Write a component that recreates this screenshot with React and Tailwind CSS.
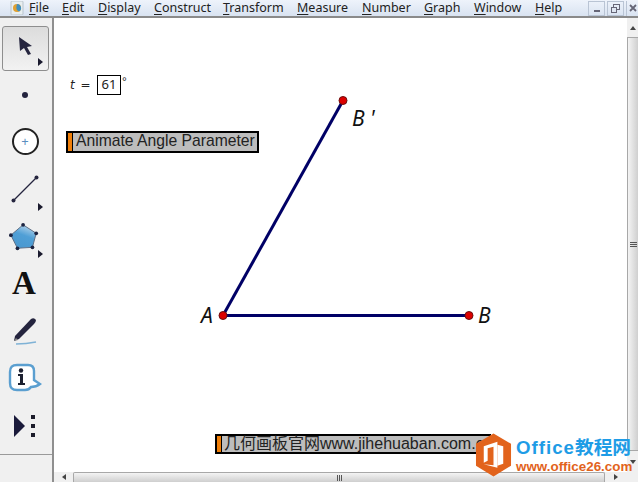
import React from 'react';

const MENUS = [
  ['F', 'ile', 'w-[33px]'],
  ['E', 'dit', 'w-[36px]'],
  ['D', 'isplay', 'w-[56px]'],
  ['C', 'onstruct', 'w-[69px]'],
  ['T', 'ransform', 'w-[74px]'],
  ['M', 'easure', 'w-[65px]'],
  ['N', 'umber', 'w-[62px]'],
  ['G', 'raph', 'w-[50px]'],
  ['W', 'indow', 'w-[61px]'],
  ['H', 'elp', 'w-[40px]'],
];

function Arrow() {
  return (
    <svg width="6" height="8" viewBox="0 0 6 8" className="absolute">
      <path d="M0 0L5 4L0 8Z" fill="#1a1a2e" />
    </svg>
  );
}

function MenuBar() {
  return (
    <div className="flex h-[18px] items-center border-b-2 border-[#8a8a8a] bg-gradient-to-b from-[#eef3fb] to-[#d9e3f1] text-[12.5px] text-[#222]">
      <div className="flex w-[29px] shrink-0 justify-center pl-1">
        <svg width="14" height="14" viewBox="0 0 14 14">
          <rect x="1" y="0" width="12" height="14" rx="1" fill="#e8eef0" stroke="#b8c4cc" />
          <circle cx="7" cy="7" r="4" fill="#e0a030" />
          <path d="M7 3A4 4 0 0 1 9 10.500Q5 9 7 3Z" fill="#3f8fc0" />
        </svg>
      </div>
      {MENUS.map(([first, rest, width]) => (
        <div key={first + rest} className={`${width} shrink-0`}>
          <span className="underline decoration-1 underline-offset-2">{first}</span>
          {rest}
        </div>
      ))}
      <div className="ml-auto flex h-[16px] items-center gap-[2px] pr-0">
        <div className="flex h-[15px] w-[17px] items-end justify-center border border-[#b9c4d4] pb-[3px]">
          <div className="h-[2px] w-[6px] bg-[#667]" />
        </div>
        <div className="flex h-[15px] w-[17px] items-center justify-center border border-[#b9c4d4]">
          <svg width="9" height="9" viewBox="0 0 9 9" fill="none" stroke="#667">
            <rect x="2.500" y="0.500" width="6" height="5" />
            <rect x="0.500" y="3.500" width="5" height="5" fill="#dfe6f2" />
          </svg>
        </div>
        <div className="flex h-[15px] w-[12px] items-center justify-center border-l border-[#b9c4d4]">
          <svg width="8" height="8" viewBox="0 0 8 8" stroke="#667" strokeWidth="1.800">
            <path d="M1 1L7 7M7 1L1 7" />
          </svg>
        </div>
      </div>
    </div>
  );
}

function ToolSlot({ children, more }) {
  return (
    <div className="relative flex h-[47.300px] items-center justify-center">
      {children}
      {more && (
        <div className="absolute bottom-[2px] right-[8px] flex h-2 w-[6px]">
          <Arrow />
        </div>
      )}
    </div>
  );
}

function ToolBar() {
  return (
    <div className="flex w-[54px] shrink-0 flex-col border-r-2 border-[#8f8f8f] bg-[#f0f0f0]">
      <div className="flex-1 pt-[8px]">
        <div className="relative mx-[2px] flex h-[45px] w-[47px] items-center justify-center rounded-[3px] border border-[#8e8e8e] bg-gradient-to-b from-[#dcdcdc] to-[#f2f2f2]">
          <svg width="16" height="20" viewBox="0 0 16 20" className="mb-[6px] ml-[1px]">
            <path d="M1 1L14 10L9 11L13 18L10 19L6 12L2 15Z" fill="#24243e" />
          </svg>
          <div className="absolute bottom-[4px] right-[4px] h-2 w-[6px]">
            <Arrow />
          </div>
        </div>
        <ToolSlot>
          <div className="mr-[2px] h-[6px] w-[6px] rounded-full bg-[#24243e]" />
        </ToolSlot>
        <ToolSlot>
          <div className="mr-[2px] flex h-[27px] w-[27px] items-center justify-center rounded-full border-2 border-[#222] bg-white text-[13px] leading-none text-[#5b8fc0]">
            +
          </div>
        </ToolSlot>
        <ToolSlot more>
          <svg width="28" height="28" viewBox="0 0 28 28" className="mr-[2px]">
            <path d="M2 26L26 2" stroke="#24243e" strokeWidth="1.200" />
            <circle cx="2.500" cy="25.500" r="2" fill="#24243e" />
            <circle cx="25.500" cy="2.500" r="2" fill="#24243e" />
          </svg>
        </ToolSlot>
        <ToolSlot more>
          <svg width="30" height="30" viewBox="0 0 32 30" className="mr-[5px]">
            <defs>
              <linearGradient id="poly" x1="0.700" y1="0" x2="0.300" y2="1">
                <stop offset="0" stopColor="#b9d6ec" />
                <stop offset="0.450" stopColor="#4f9fd6" />
                <stop offset="1" stopColor="#4a98cf" />
              </linearGradient>
            </defs>
            <path d="M15 2L29 11L25 26L9 27L2 13Z" fill="url(#poly)" stroke="#5a6a80" />
            {[[15, 2], [29, 11], [25, 26], [9, 27], [2, 13]].map(([cx, cy]) => (
              <circle key={cx} cx={cx} cy={cy} r="2" fill="#1c2340" />
            ))}
          </svg>
        </ToolSlot>
        <ToolSlot>
          <span className="mr-[4px] font-['Liberation_Serif',serif] text-[33px] font-bold leading-none text-[#111]">A</span>
        </ToolSlot>
        <ToolSlot>
          <svg width="28" height="28" viewBox="0 0 28 28" className="mr-[5px]">
            <path d="M5 19L21 2Q24 0 26 3Q26 5 24 7L9 22L4 24Z" fill="#24243e" />
            <path d="M4 24L6 21L8 23Z" fill="#8a8a8a" />
            <path d="M6 27Q16 27 26 25" fill="none" stroke="#7fb2d6" strokeWidth="1.500" />
          </svg>
        </ToolSlot>
        <ToolSlot>
          <svg width="34" height="30" viewBox="0 0 34 30" className="mr-[2px]">
            <path d="M9 2H20Q26 2 26 8V17L32 21Q28 24 23 24Q21 27 17 27H9Q2 27 2 20V9Q2 2 9 2Z" fill="#fff" stroke="#5b9fd0" strokeWidth="2.400" />
            <circle cx="13" cy="7.500" r="2.200" fill="#1c2030" />
            <path d="M10 11H15V20H17V22H10V20H12V13H10Z" fill="#1c2030" />
          </svg>
        </ToolSlot>
        <ToolSlot>
          <svg width="24" height="24" viewBox="0 0 24 24" className="mr-[2px]">
            <path d="M1 1L12 12L1 23Z" fill="#1a1a3a" />
            <rect x="18" y="1" width="4" height="4" fill="#1c1c2a" />
            <rect x="18" y="10" width="4" height="4" fill="#1c1c2a" />
            <rect x="18" y="19" width="4" height="4" fill="#1c1c2a" />
          </svg>
        </ToolSlot>
      </div>
      <div className="h-[28px] border-t border-[#9a9a9a]" />
    </div>
  );
}

function ActionButton({ className, children }) {
  return (
    <div className={`absolute flex whitespace-nowrap border-2 border-black bg-[#bdbdbd] font-['Liberation_Sans',sans-serif] text-[#222] ${className}`}>
      <div className="w-[5px] shrink-0 border-r border-black bg-[#f07f09]" />
      {children}
    </div>
  );
}

function Sketch() {
  return (
    <div className="relative flex-1 bg-white">
      <svg width="573" height="454" className="absolute inset-0">
        <g stroke="#000066" strokeWidth="3">
          <path d="M169 297.500L289 82.500" />
          <path d="M169 297.500H415" />
        </g>
        {[[169, 297.5], [289, 82.5], [415, 297.5]].map(([cx, cy]) => (
          <circle key={cx} cx={cx} cy={cy} r="4" fill="#dd0000" stroke="#6b1010" />
        ))}
      </svg>

      <div className="absolute left-[16px] top-[57px] flex items-start font-['Liberation_Sans',sans-serif] text-[#222]">
        <span className="mt-[2px] w-[27px] font-['DejaVu_Sans',sans-serif] text-[12px] leading-[16px]">
          <i className="mr-[2px]">t</i> =
        </span>
        <div className="flex h-[20px] w-[24px] items-center justify-center border border-black font-['Noto_Sans',sans-serif] text-[13px]">61</div>
        <span className="ml-[1px] text-[12px] leading-[14px]">°</span>
      </div>

      <ActionButton className="left-[12px] top-[113px] h-[22px] w-[193px] text-[15.700px] leading-[16px]">
        <span className="pl-[3px]">Animate Angle Parameter</span>
      </ActionButton>

      {[
        ['A', 'left-[147px] top-[284px]'],
        ['B', 'left-[424px] top-[284px]'],
        ["B '", 'left-[298px] top-[87px]'],
      ].map(([label, place]) => (
        <span key={label} className={`absolute font-['Noto_Sans',sans-serif] text-[21px] italic leading-[26px] text-[#111] ${place}`}>
          {label}
        </span>
      ))}

      <ActionButton className="left-[161px] top-[416px] h-[20px] w-[276px] text-[16px] leading-[15px]">
        <span className="pl-[2px] font-['Liberation_Sans','Noto_Sans_CJK_SC',sans-serif]">几何画板官网www.jihehuaban.com.cn</span>
      </ActionButton>
    </div>
  );
}

function ScrollV() {
  return (
    <div className="flex w-[11px] shrink-0 flex-col items-center bg-[#f0f0f0]">
      <div className="flex h-[19px] items-center">
        <div className="h-0 w-0 border-x-[3px] border-b-[4px] border-x-transparent border-b-[#444]" />
      </div>
      <div className="flex w-full flex-1 items-center justify-center border-y border-l border-[#a8a8a8] bg-gradient-to-r from-[#f4f4f4] to-[#cfcfcf]">
        <div className="flex flex-col gap-[1px]">
          <div className="h-[1px] w-[7px] bg-[#555]" />
          <div className="h-[1px] w-[7px] bg-[#555]" />
          <div className="h-[1px] w-[7px] bg-[#555]" />
        </div>
      </div>
      <div className="flex h-[21px] items-center">
        <div className="h-0 w-0 border-x-[3px] border-t-[4px] border-x-transparent border-t-[#444]" />
      </div>
    </div>
  );
}

function ScrollH() {
  return (
    <div className="flex h-[10px] shrink-0 items-center bg-[#f0f0f0]">
      <div className="flex w-[19px] shrink-0 justify-center">
        <div className="h-0 w-0 border-y-[3px] border-r-[4px] border-y-transparent border-r-[#444]" />
      </div>
      <div className="flex h-full flex-1 items-center justify-center rounded-t-[2px] border-x border-t border-[#a8a8a8] bg-gradient-to-b from-[#f4f4f4] to-[#cfcfcf]">
        <div className="flex gap-[1px]">
          <div className="h-[6px] w-[1px] bg-[#555]" />
          <div className="h-[6px] w-[1px] bg-[#555]" />
          <div className="h-[6px] w-[1px] bg-[#555]" />
        </div>
      </div>
      <div className="flex w-[22px] shrink-0 justify-center">
        <div className="h-0 w-0 border-y-[3px] border-l-[4px] border-y-transparent border-l-[#444]" />
      </div>
      <div className="w-[11px] shrink-0" />
    </div>
  );
}

function Watermark() {
  return (
    <div className="absolute left-[475px] top-[433px] flex">
      <svg width="37" height="44" viewBox="0 0 38 44">
        <path d="M19 0L37 10.500V33L19 44L1 33V10.500Z" fill="#e2631c" />
        <path d="M9 13L23 8.500V35L9 31.500L19 32.500V13.500L13 15V28L9 30Z" fill="#fff" />
        <path d="M23 11.500L29 13V31L23 33Z" fill="#fff" />
      </svg>
      <div className="ml-[4px] flex flex-col font-['Liberation_Sans','Noto_Sans_CJK_SC',sans-serif] font-bold">
        <span className="mt-[3px] whitespace-nowrap text-[18.700px] leading-[23px] text-[#1e9ce6]">
          <span className="tracking-[1px]">Office</span>教程网
        </span>
        <span className="whitespace-nowrap text-[13.400px] leading-[15px] text-[#e2631c]">www.office26.com</span>
      </div>
    </div>
  );
}

export default function App() {
  return (
    <div className="relative flex h-[482px] w-[638px] flex-col overflow-hidden bg-white font-['Noto_Sans',sans-serif]">
      <MenuBar />
      <div className="flex min-h-0 flex-1">
        <ToolBar />
        <div className="flex min-w-0 flex-1 flex-col">
          <div className="flex min-h-0 flex-1">
            <Sketch />
            <ScrollV />
          </div>
          <ScrollH />
        </div>
      </div>
      <Watermark />
    </div>
  );
}
